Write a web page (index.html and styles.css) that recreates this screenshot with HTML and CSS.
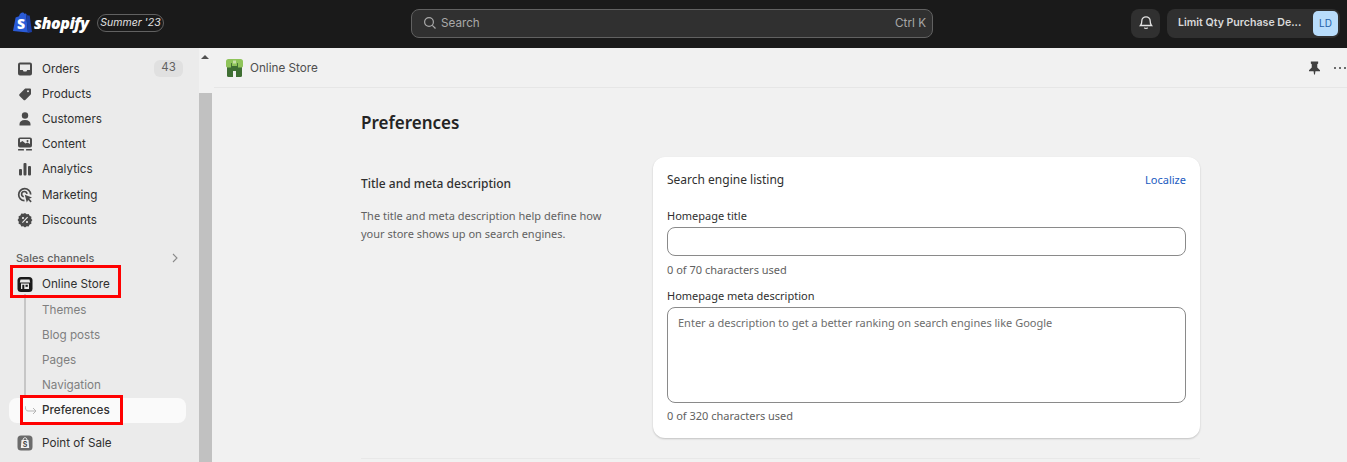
FILE: index.html
```html
<!DOCTYPE html>
<html lang="en">
<head>
    <meta charset="UTF-8">
    <title>Online Store - Preferences</title>
    <link rel="stylesheet" href="styles.css">
</head>
<body>
    <header class="topbar">
        <div class="brand">
            <svg class="bag" width="21" height="22" viewBox="0 0 21 22">
                <path fill="#2a5bd7" d="M1 19 3.600 5.400 7 4.200C7.700 2 9 .6 10.600 .6c.8 0 1.400.5 1.800 1.200L14 1.500 16 20.500 1 19z"/>
                <path fill="#1b3fa8" d="M14 1.500l1.700 1.900 2 .2L20 20l-4 .9z"/>
                <text x="5" y="17" class="bag-s">S</text>
            </svg>
            <span class="wordmark">shopify</span>
            <span class="edition">Summer '23</span>
        </div>
        <div class="search">
            <svg width="14" height="14" viewBox="0 0 14 14" fill="none" stroke="#a8a8a8" stroke-width="1.200"><circle cx="6" cy="6" r="4.400"/><path d="M9.300 9.300 12.500 12.500"/></svg>
            <span class="search-text">Search</span>
            <span class="search-key">Ctrl K</span>
        </div>
        <div class="top-actions">
            <button class="bell">
                <svg width="16" height="16" viewBox="0 0 16 16" fill="none" stroke="#e3e3e3" stroke-width="1.300"><path d="M2.500 11.500c1-1 1.300-2 1.300-4.500a4.200 4.200 0 0 1 8.400 0c0 2.500.3 3.500 1.300 4.500z"/><path d="M6.300 13.800c.8.8 2.600.8 3.400 0"/></svg>
            </button>
            <div class="store-btn">
                <span class="store-name">Limit Qty Purchase De...</span>
                <span class="avatar">LD</span>
            </div>
        </div>
    </header>

    <div class="frame">
        <nav class="sidebar">
            <a class="nav-item">
                <svg viewBox="0 0 16 16"><path fill-rule="evenodd" d="M3 1.500h10a2 2 0 0 1 2 2v9a2 2 0 0 1-2 2H3a2 2 0 0 1-2-2v-9a2 2 0 0 1 2-2zM3 3.500v5.500h2.800l.8 1.500h2.800l.8-1.500H13V3.500z"/></svg>
                <span>Orders</span>
                <span class="badge">43</span>
            </a>
            <a class="nav-item">
                <svg viewBox="0 0 16 16"><path fill-rule="evenodd" d="M9 2.500h4a1 1 0 0 1 1 1v4c0 .5-.2.9-.5 1.200l-5 5a1.500 1.500 0 0 1-2.100 0L2.600 10a1.500 1.500 0 0 1 0-2.100l5-5C8 2.600 8.500 2.500 9 2.500zM11 4.200a1 1 0 1 0 0 2 1 1 0 0 0 0-2z"/></svg>
                <span>Products</span>
            </a>
            <a class="nav-item">
                <svg viewBox="0 0 16 16"><circle cx="8" cy="4.500" r="3.200"/><path d="M2.500 14.500v-1.500c0-2 1.800-4 5.500-4s5.500 2 5.500 4v1.500z"/></svg>
                <span>Customers</span>
            </a>
            <a class="nav-item">
                <svg viewBox="0 0 16 16"><path fill-rule="evenodd" d="M3 1.500h10a2 2 0 0 1 2 2v6a2 2 0 0 1-2 2H3a2 2 0 0 1-2-2v-6a2 2 0 0 1 2-2zM3 3v3.500l2.500-1.500 3 2.500 2-1L13 8V3zM10.500 4a1 1 0 1 0 0 2 1 1 0 0 0 0-2z"/><rect x="1" y="13" width="6" height="1.600" rx=".6"/><rect x="9" y="13" width="6" height="1.600" rx=".6"/></svg>
                <span>Content</span>
            </a>
            <a class="nav-item">
                <svg viewBox="0 0 16 16"><rect x="2" y="8" width="3" height="6.500" rx="1"/><rect x="6.500" y="2" width="3" height="12.500" rx="1"/><rect x="11" y="5" width="3" height="9.500" rx="1"/></svg>
                <span>Analytics</span>
            </a>
            <a class="nav-item">
                <svg viewBox="0 0 16 16"><path fill="none" stroke="#4a4a4a" stroke-width="1.700" d="M7.500 13.700A6 6 0 1 1 13.700 7.500"/><path fill="none" stroke="#4a4a4a" stroke-width="1.600" d="M6.800 9.800A2.700 2.700 0 1 1 10 6.800"/><path d="M7.800 7.800 15 10.500l-2.800 1.300 2.500 2.500-1.100 1.100-2.500-2.500-1.300 2.500z"/></svg>
                <span>Marketing</span>
            </a>
            <a class="nav-item">
                <svg viewBox="0 0 16 16"><path fill-rule="evenodd" d="M8 1l1.700 1.200 2-.2.9 1.800 1.800.9-.2 2L15.400 8l-1.200 1.700.2 2-1.800.9-.9 1.800-2-.2L8 15.400l-1.700-1.200-2 .2-.9-1.800-1.800-.9.2-2L.6 8l1.200-1.700-.2-2 1.800-.9.9-1.800 2 .2zM6 4.900a1.100 1.100 0 1 0 0 2.200 1.100 1.100 0 0 0 0-2.200zM10 8.900a1.100 1.100 0 1 0 0 2.200 1.100 1.100 0 0 0 0-2.200zM10.200 4.800 5 10.200l.8.800 5.200-5.400z"/></svg>
                <span>Discounts</span>
            </a>

            <div class="nav-heading">
                <span>Sales channels</span>
                <svg width="8" height="10" viewBox="0 0 8 10" fill="none" stroke="#8a8a8a" stroke-width="1.100"><path d="M2 1l4 4-4 4"/></svg>
            </div>

            <a class="nav-item active-channel">
                <svg viewBox="0 0 16 16">
                    <rect x=".5" y="1" width="15" height="15" rx="3.500" fill="#1a1a1a"/>
                    <path fill="#e8e8e8" d="M3.500 3.500h9l.7 3H2.800z"/>
                    <rect x="4" y="7.500" width="8" height="5.500" fill="#e8e8e8"/>
                    <rect x="5.300" y="8.800" width="2" height="4.200" fill="#1a1a1a"/>
                    <rect x="8.500" y="8.800" width="2.300" height="2" fill="#1a1a1a"/>
                </svg>
                <span>Online Store</span>
            </a>
            <div class="sublist">
                <a class="sub-item">Themes</a>
                <a class="sub-item">Blog posts</a>
                <a class="sub-item">Pages</a>
                <a class="sub-item">Navigation</a>
                <a class="sub-item current">
                    <svg class="sub-arrow" width="12" height="10" viewBox="0 0 12 10" fill="none" stroke="#b5b5b5" stroke-width="1"><path d="M0 0C.5 3 1 5 3 5h8M8 2l3 3-3 3"/></svg>
                    Preferences
                </a>
            </div>

            <a class="nav-item pos">
                <svg viewBox="0 0 16 16">
                    <rect x=".5" y=".5" width="15" height="15" rx="3.500" fill="#6b6b6b"/>
                    <path fill="#f2f2f2" d="M4.500 5h7l.7 8H3.800z"/>
                    <path fill="none" stroke="#f2f2f2" d="M6 5c0-3 4-3 4 0"/>
                    <text x="8" y="12" class="pos-s">S</text>
                </svg>
                <span>Point of Sale</span>
            </a>
        </nav>

        <div class="scrollbar">
            <div class="scroll-track"><span class="scroll-arrow"></span></div>
            <div class="scroll-thumb"></div>
        </div>

        <main class="main">
            <div class="app-header">
                <div class="app-title">
                    <svg width="17" height="18" viewBox="0 0 17 18">
                        <rect x="1" y="5" width="15" height="13" rx="1.500" fill="#3f6f33"/>
                        <rect x="7" y="12" width="3" height="6" fill="#f1f1f1"/>
                        <path fill="#8fc45a" d="M2.500 0h12A2.500 2.500 0 0 1 17 2.500V7c0 1-1 1.500-2 1.500H2C1 8.500 0 8 0 7V2.500A2.500 2.500 0 0 1 2.500 0z"/>
                        <path fill="#3f6f33" d="M5 4h7v5H5z"/>
                        <path fill="#8fc45a" d="M5.500 0h6l-.5 7H6z"/>
                        <rect x="7" y="1.500" width="3" height="3" fill="#c8dfa8"/>
                    </svg>
                    <span>Online Store</span>
                </div>
                <div class="app-actions">
                    <svg width="11" height="14" viewBox="0 0 12 14"><path fill="#3f3f3f" d="M2 0h8v2L9 3v3.500l3 3V10.500H7L6.500 14h-1L5 10.500H0V9.500l3-3V3L2 2z"/></svg>
                    <span class="dots"><i></i><i></i><i></i></span>
                </div>
            </div>

            <div class="content">
                <h1 class="page-title">Preferences</h1>
                <section class="section">
                    <div class="section-info">
                        <h2>Title and meta description</h2>
                        <p>The title and meta description help define how your store shows up on search engines.</p>
                    </div>
                    <div class="card">
                        <div class="card-head">
                            <h3>Search engine listing</h3>
                            <a class="link">Localize</a>
                        </div>
                        <label class="field-label">Homepage title</label>
                        <div class="input"></div>
                        <div class="help title-help">0 of 70 characters used</div>
                        <label class="field-label second">Homepage meta description</label>
                        <div class="input area">Enter a description to get a better ranking on search engines like Google</div>
                        <div class="help">0 of 320 characters used</div>
                    </div>
                </section>
                <div class="divider"></div>
            </div>
        </main>
    </div>

    <!-- red annotation boxes from the screenshot -->
    <div class="mark mark-store"></div>
    <div class="mark mark-pref"></div>
</body>
</html>
```

FILE: styles.css
```css
* {
    box-sizing: border-box;
}
html, body {
    height: 100%;
}
body {
    margin: 0;
    overflow: hidden;
    font-family: Inter, "Noto Sans", sans-serif;
    font-size: 11.7px;
    color: #303030;
    background: #f1f1f1;
    position: relative;
}
.topbar {
    height: 48px;
    background: #1a1a1a;
    display: flex;
    align-items: center;
    padding: 0 7px 1px 12px;
}
.brand {
    width: 399px;
    display: flex;
    align-items: center;
    padding-bottom: 2px;
}
.bag {
    flex: none;
}
.bag-s {
    font-family: "Open Sans", sans-serif;
    font-weight: 800;
    font-size: 14px;
    fill: #fff;
}
.wordmark {
    font-family: "Open Sans", sans-serif;
    font-style: italic;
    font-weight: 800;
    font-size: 16px;
    line-height: 18px;
    color: #fff;
    margin-left: 1px;
    width: 63px;
    letter-spacing: -0.5px;
}
.edition {
    border: 1px solid #616161;
    border-radius: 9px;
    height: 18px;
    width: 67px;
    line-height: 16px;
    text-align: center;
    font-style: italic;
    font-size: 10.5px;
    color: #e3e3e3;
}
.search {
    width: 522px;
    height: 29px;
    background: #303030;
    border: 1px solid #616161;
    border-radius: 8px;
    display: flex;
    align-items: center;
    padding: 0 6px 1px 11px;
    color: #a8a8a8;
}
.search-text {
    margin-left: 4px;
}
.search-key {
    margin-left: auto;
}
.top-actions {
    margin-left: auto;
    display: flex;
    gap: 7px;
}
.bell {
    width: 29px;
    height: 29px;
    background: #303030;
    border: 0;
    border-radius: 8px;
    padding: 0 0 3px;
    display: flex;
    align-items: center;
    justify-content: center;
}
.store-btn {
    width: 173px;
    height: 29px;
    background: #303030;
    border-radius: 8px;
    display: flex;
    align-items: center;
    justify-content: space-between;
    padding: 0 2px 0 11px;
    color: #d9d9d9;
    font-size: 10.6px;
    font-weight: 600;
}
.store-name {
    margin-bottom: 2px;
}
.avatar {
    width: 25px;
    height: 25px;
    background: #b8dcfb;
    border-radius: 5px;
    color: #1f5fa8;
    font-weight: 400;
    font-size: 10px;
    line-height: 25px;
    text-align: center;
}
.frame {
    display: flex;
    height: 414px;
}
.sidebar {
    width: 199px;
    flex: none;
    background: #ebebeb;
    padding: 8px 13px 0 9px;
    overflow: hidden;
}
.nav-item {
    display: flex;
    align-items: center;
    height: 25.2px;
    padding: 0 3px 0 8px;
    color: #303030;
}
.nav-item svg {
    width: 16px;
    height: 16px;
    flex: none;
    margin-right: 9px;
    fill: #4a4a4a;
}
.badge {
    margin-left: auto;
    width: 29px;
    height: 17px;
    background: #e0e0e0;
    border-radius: 6px;
    text-align: center;
    font-size: 11.5px;
    line-height: 15px;
    color: #616161;
}
.nav-heading {
    display: flex;
    align-items: center;
    justify-content: space-between;
    height: 25px;
    margin-top: 14px;
    padding: 0 7px 2px;
    font-size: 10.9px;
    font-weight: 500;
    color: #616161;
}
.pos-s {
    font-family: Inter, sans-serif;
    font-size: 7px;
    font-weight: 700;
    text-anchor: middle;
    fill: #4a4a4a;
}
.sublist {
    position: relative;
    margin-top: 1px;
}
.sublist::before {
    content: "";
    position: absolute;
    left: 15px;
    top: -4px;
    height: 110px;
    width: 1.5px;
    background: #c6c6c6;
}
.sub-item {
    display: block;
    position: relative;
    height: 25.2px;
    line-height: 25px;
    padding-left: 33px;
    color: #7f7f7f;
}
.sub-item.current {
    background: #fafafa;
    border-radius: 8px;
    color: #303030;
    font-weight: 500;
}
.sub-arrow {
    position: absolute;
    left: 15.500px;
    top: 8px;
}
.pos {
    margin-top: 7px;
}
.scrollbar {
    width: 13px;
    flex: none;
    display: flex;
    flex-direction: column;
}
.scroll-track {
    height: 45px;
    background: #f1f1f1;
    padding: 7px 0 0 2px;
}
.scroll-arrow {
    display: block;
    width: 0;
    border-left: 4px solid transparent;
    border-right: 4px solid transparent;
    border-bottom: 4px solid #505050;
}
.scroll-thumb {
    flex: 1;
    background: #c1c1c1;
}
.main {
    flex: 1;
    min-width: 0;
}
.app-header {
    height: 40px;
    margin-left: 2px;
    display: flex;
    align-items: center;
    justify-content: space-between;
    padding: 0 0 0 12px;
    border-bottom: 1px solid #e6e6e6;
}
.app-title {
    display: flex;
    align-items: center;
    gap: 7px;
    color: #4f4f4f;
}
.app-actions {
    display: flex;
    align-items: center;
    gap: 14px;
    width: 38px;
}
.dots {
    display: flex;
    flex: none;
    gap: 3px;
}
.dots i {
    width: 2px;
    height: 2px;
    border-radius: 50%;
    background: #3f3f3f;
}
/* the embedded page uses a different, narrower font than the admin frame */
.content {
    width: 839px;
    margin-left: 149px;
    font-family: "Noto Sans", sans-serif;
}
.page-title {
    margin: 0;
    padding-top: 24px;
    height: 69px;
    font-size: 17px;
    line-height: 22px;
    font-weight: 600;
    color: #242424;
}
.section {
    display: flex;
}
.section-info {
    width: 292px;
    flex: none;
    padding-top: 19px;
}
.section-info h2 {
    margin: 0 0 15px;
    font-size: 12px;
    line-height: 16px;
    font-weight: 500;
}
.section-info p {
    margin: 0;
    width: 250px;
    font-size: 11px;
    line-height: 18px;
    color: #616161;
}
.card {
    flex: 1;
    height: 281px;
    background: #fff;
    border-radius: 12px;
    box-shadow: 0 1px 2px rgba(0, 0, 0, 0.2);
    padding: 13px 14px 0;
}
.card-head {
    display: flex;
    align-items: center;
    justify-content: space-between;
    height: 18px;
    margin-bottom: 20px;
}
.card-head h3 {
    margin: 0;
    font-size: 12px;
    font-weight: 400;
}
.link {
    font-size: 11px;
    color: #1a5bbf;
}
.field-label {
    display: block;
    height: 19px;
    line-height: 15px;
    font-size: 11px;
}
.field-label.second {
    margin-top: 11px;
}
.input {
    height: 29px;
    border: 1px solid #8a8a8a;
    border-radius: 8px;
    background: #fff;
}
.input.area {
    height: 96px;
    padding: 8px 10px;
    font-size: 11px;
    line-height: 14px;
    color: #6d6d6d;
}
.help {
    margin-top: 5px;
    height: 15px;
    line-height: 15px;
    font-size: 11px;
    color: #616161;
}
.title-help {
    margin-top: 6px;
}
.divider {
    margin-top: 20px;
    height: 1px;
    background: #e8e8e8;
}
.mark {
    position: absolute;
    border: 3px solid #f00;
}
.mark-store {
    left: 10px;
    top: 265px;
    width: 111px;
    height: 33px;
}
.mark-pref {
    left: 20px;
    top: 395px;
    width: 103px;
    height: 30px;
}
```
